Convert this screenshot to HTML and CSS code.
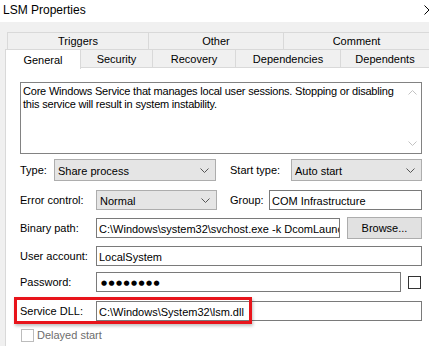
FILE: index.html
```html
<!DOCTYPE html>
<html lang="en">
<head>
    <meta charset="UTF-8">
    <title>LSM Properties</title>
    <link rel="stylesheet" href="styles.css">
</head>
<body>

    <header class="titlebar">
        <span class="title">LSM Properties</span>
        <svg class="close" width="10" height="10" viewBox="0 0 10 10">
            <path d="M0.5 0.5 L9.5 9.5 M9.5 0.5 L0.5 9.5" stroke="#000" stroke-width="1" fill="none"/>
        </svg>
    </header>

    <section class="dialog">

        <div class="tabs">
            <div class="tabrow top">
                <div class="tab" style="width:142px">Triggers</div>
                <div class="tab" style="width:135px">Other</div>
                <div class="tab grow">Comment</div>
            </div>
            <div class="tabrow bottom">
                <div class="tab valgt" style="width:76px">General</div>
                <div class="tab" style="width:72px">Security</div>
                <div class="tab" style="width:83px">Recovery</div>
                <div class="tab" style="width:105px">Dependencies</div>
                <div class="tab grow">Dependents</div>
            </div>
        </div>

        <div class="panel">

            <div class="desc">
                <p>Core Windows Service that manages local user sessions. Stopping or disabling this service will result in system instability.</p>
                <div class="scroll">
                    <svg width="9" height="5" viewBox="0 0 9 5"><path d="M0.5 4.5 L4.5 0.5 L8.5 4.5" stroke="#c2c2c2" fill="none"/></svg>
                    <svg width="9" height="5" viewBox="0 0 9 5"><path d="M0.5 0.5 L4.5 4.5 L8.5 0.5" stroke="#c2c2c2" fill="none"/></svg>
                </div>
            </div>

            <div class="row r-type">
                <label class="lbl" style="width:34px">Type:</label>
                <div class="combo" style="width:162px">Share process<svg class="chev" width="9" height="5" viewBox="0 0 9 5"><path d="M0.5 0.5 L4.5 4.5 L8.5 0.5" stroke="#555" fill="none"/></svg></div>
                <label class="lbl right" style="width:61px">Start type:</label>
                <div class="combo" style="width:131px">Auto start<svg class="chev" width="9" height="5" viewBox="0 0 9 5"><path d="M0.5 0.5 L4.5 4.5 L8.5 0.5" stroke="#555" fill="none"/></svg></div>
            </div>

            <div class="row r-error">
                <label class="lbl" style="width:76px">Error control:</label>
                <div class="combo short" style="width:121px">Normal<svg class="chev" width="9" height="5" viewBox="0 0 9 5"><path d="M0.5 0.5 L4.5 4.5 L8.5 0.5" stroke="#555" fill="none"/></svg></div>
                <label class="lbl right2" style="width:39px">Group:</label>
                <div class="field" style="width:153px">COM Infrastructure</div>
            </div>

            <div class="row r-binary">
                <label class="lbl" style="width:76px">Binary path:</label>
                <div class="field" style="width:244px">C:\Windows\system32\svchost.exe -k DcomLaunch</div>
                <button class="browse">Browse...</button>
            </div>

            <div class="row r-user">
                <label class="lbl" style="width:76px">User account:</label>
                <div class="field" style="width:326px">LocalSystem</div>
            </div>

            <div class="row r-pass">
                <label class="lbl" style="width:76px">Password:</label>
                <div class="field dots" style="width:305px">●●●●●●●●</div>
                <span class="check"></span>
            </div>

            <div class="row r-dll">
                <label class="lbl" style="width:76px">Service DLL:</label>
                <div class="field" style="width:326px">C:\Windows\System32\lsm.dll</div>
            </div>

            <div class="row r-delay">
                <span class="check off"></span>
                <span class="delay">Delayed start</span>
            </div>

            <div class="redbox"></div>
        </div>

    </section>

</body>
</html>
```

FILE: styles.css
```css
* {
    box-sizing: border-box;
}

body {
    margin: 0;
    width: 429px;
    height: 346px;
    overflow: hidden;
    background-color: white;
    font-family: "Liberation Sans", Arial, sans-serif;
    font-size: 11px;
    color: black;
}

.titlebar {
    height: 22px;
    display: flex;
    align-items: center;
    justify-content: space-between;
    padding-left: 3px;
    background-color: white;
}

.title {
    font-size: 12px;
    margin-top: -2px;
}

.close {
    margin-right: -5px;
    margin-top: -3px;
}

.dialog {
    background-color: #f0f0f0;
    height: 324px;
    padding-top: 10px;
    padding-left: 5px;
    overflow: hidden;
}

.tabrow {
    display: flex;
}

.tabrow.top {
    margin-left: 2px;
}

.tab {
    display: flex;
    align-items: center;
    justify-content: center;
    border: 1px solid #d9d9d9;
    border-left: none;
    background-color: #f0f0f0;
    flex-shrink: 0;
}

.tab.grow {
    flex-grow: 1;
    border-right: none;
}

.tabrow.top .tab {
    height: 17px;
    border-bottom: none;
}

.tabrow.top .tab:first-child {
    border-left: 1px solid #d9d9d9;
}

.tabrow.bottom {
    align-items: flex-end;
}

.tabrow.bottom .tab {
    height: 19px;
    padding-top: 1px;
}

.tab.valgt {
    height: 20px !important;
    margin-top: -1px;
    background-color: white;
    border-left: 1px solid #d9d9d9;
    border-bottom: none;
    position: relative;
    z-index: 1;
    padding-top: 0 !important;
    margin-bottom: -1px;
}

.panel {
    position: relative;
    background-color: white;
    border-left: 1px solid #d9d9d9;
    height: 278px;
    padding: 14px 0 0 14px;
}

.desc {
    width: 402px;
    height: 72px;
    border: 1px solid #828282;
    display: flex;
}

.desc p {
    margin: 0;
    padding: 2px 0 0 2px;
    flex-grow: 1;
    line-height: 13px;
    letter-spacing: -0.2px;
}

.scroll {
    width: 17px;
    display: flex;
    flex-direction: column;
    justify-content: space-between;
    align-items: center;
    padding: 7px 0 7px 0;
    flex-shrink: 0;
}

.row {
    display: flex;
    align-items: center;
}

.lbl {
    flex-shrink: 0;
    white-space: nowrap;
}

.lbl.right {
    margin-left: 14px;
}

.lbl.right2 {
    margin-left: 13px;
}

.r-type {
    margin-top: 5px;
    height: 22px;
}

.r-error {
    margin-top: 9px;
    height: 20px;
}

.r-binary {
    margin-top: 7px;
    height: 22px;
}

.r-user {
    margin-top: 7px;
    height: 20px;
}

.r-pass {
    margin-top: 6px;
    height: 20px;
}

.r-dll {
    margin-top: 9px;
    height: 20px;
}

.r-delay {
    margin-top: 7px;
    height: 14px;
    padding-left: 1px;
}

.combo {
    height: 100%;
    background-color: #e5e5e5;
    border: 1px solid #adadad;
    display: flex;
    align-items: center;
    justify-content: space-between;
    padding: 1px 6px 0 3px;
    flex-shrink: 0;
}

.field {
    height: 20px;
    border: 1px solid #7a7a7a;
    background-color: white;
    padding: 1px 0 0 2px;
    display: flex;
    align-items: center;
    white-space: nowrap;
    overflow: hidden;
    flex-shrink: 0;
}

.dots {
    font-family: "DejaVu Sans", sans-serif;
    font-size: 7px;
    letter-spacing: 1.4px;
    padding-left: 4px;
}

.browse {
    margin-left: 7px;
    width: 75px;
    height: 22px;
    background-color: #e1e1e1;
    border: 1px solid #adadad;
    font-family: "Liberation Sans", Arial, sans-serif;
    font-size: 11px;
    color: black;
    padding: 0;
}

.check {
    width: 13px;
    height: 13px;
    border: 1px solid #333333;
    margin-left: 7px;
    flex-shrink: 0;
    background-color: white;
}

.check.off {
    margin-left: 0;
    border-color: #bcbcbc;
}

.delay {
    margin-left: 3px;
    color: #6d6d6d;
}

.redbox {
    position: absolute;
    left: 8px;
    top: 229px;
    width: 238px;
    height: 27px;
    border: 3px solid #e8141b;
    box-shadow: 1px 2px 3px rgba(0, 0, 0, 0.25);
}
```
